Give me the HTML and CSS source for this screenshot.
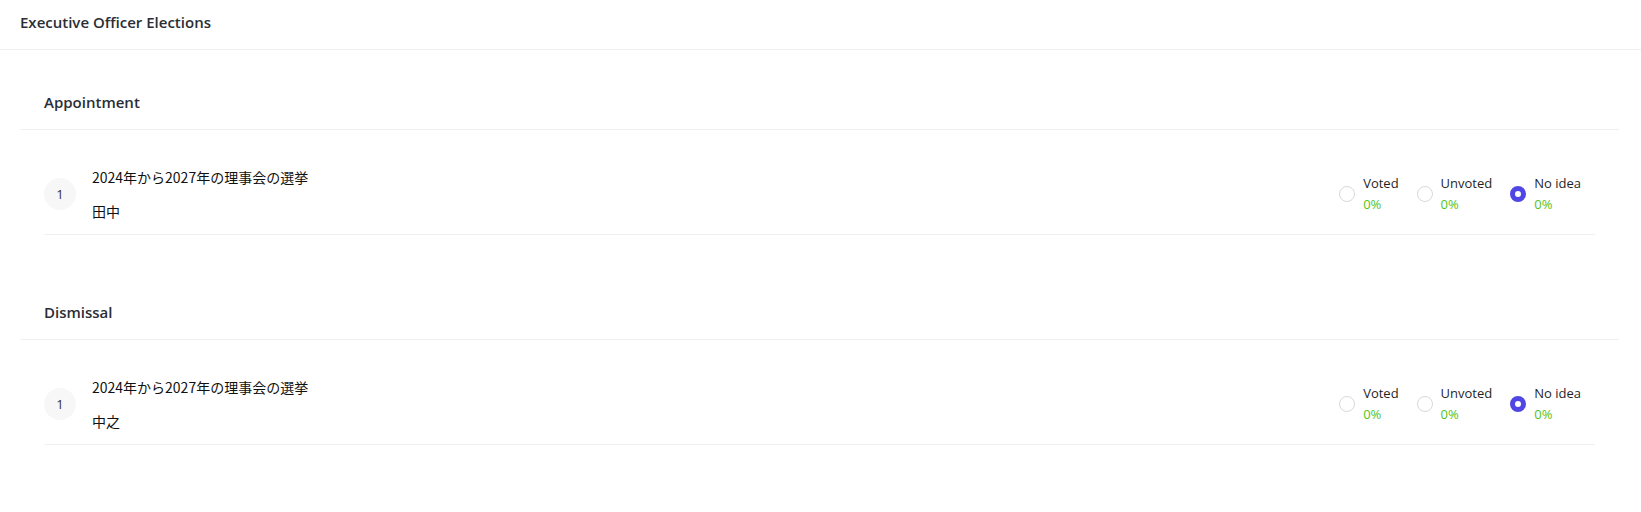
FILE: index.html
```html
<!DOCTYPE html>
<html lang="en">
<head>
<meta charset="utf-8">
<title>Executive Officer Elections</title>
<link rel="stylesheet" href="styles.css">
</head>
<body>
<header class="page-header">Executive Officer Elections</header>
<main class="content">
  <section class="section">
    <h2 class="section-title">Appointment</h2>
    <div class="list">
      <div class="row">
        <div class="index">1</div>
        <div class="info">
          <div class="title">2024年から2027年の理事会の選挙</div>
          <div class="name">田中</div>
        </div>
        <div class="options">
          <div class="option"><span class="radio"></span><div class="label"><div class="opt-name">Voted</div><div class="pct">0%</div></div></div>
          <div class="option"><span class="radio"></span><div class="label"><div class="opt-name">Unvoted</div><div class="pct">0%</div></div></div>
          <div class="option"><span class="radio checked"></span><div class="label"><div class="opt-name">No idea</div><div class="pct">0%</div></div></div>
        </div>
      </div>
    </div>
  </section>
  <section class="section">
    <h2 class="section-title">Dismissal</h2>
    <div class="list">
      <div class="row">
        <div class="index">1</div>
        <div class="info">
          <div class="title">2024年から2027年の理事会の選挙</div>
          <div class="name">中之</div>
        </div>
        <div class="options">
          <div class="option"><span class="radio"></span><div class="label"><div class="opt-name">Voted</div><div class="pct">0%</div></div></div>
          <div class="option"><span class="radio"></span><div class="label"><div class="opt-name">Unvoted</div><div class="pct">0%</div></div></div>
          <div class="option"><span class="radio checked"></span><div class="label"><div class="opt-name">No idea</div><div class="pct">0%</div></div></div>
        </div>
      </div>
    </div>
  </section>
</main>
</body>
</html>
```

FILE: styles.css
```css
* { box-sizing: border-box; }
html, body { margin: 0; padding: 0; background: #fff; }
body {
  font-family: "Open Sans", "Noto Sans CJK JP", sans-serif;
  color: #1f1f1f;
  font-size: 14px;
}
.page-header {
  height: 50px;
  padding: 11px 20px 0;
  line-height: 22px;
  font-size: 15px;
  font-weight: 600;
  color: #2a2e36;
  border-bottom: 1px solid #f0f0f0;
}
.content {
  padding: 25px 22px 0 20px;
  display: flex;
  flex-direction: column;
  gap: 50px;
}
.section-title {
  margin: 0;
  padding: 16px 24px;
  line-height: 22px;
  font-size: 15px;
  font-weight: 600;
  color: #2a2e36;
  border-bottom: 1px solid #f0f0f0;
}
.list {
  padding: 24px 24px 0;
}
.row {
  display: flex;
  align-items: center;
  padding: 12px 0;
  border-bottom: 1px solid #f0f0f0;
}
.index {
  width: 32px;
  height: 32px;
  border-radius: 50%;
  background: #f7f7f7;
  display: flex;
  align-items: center;
  justify-content: center;
  font-size: 13px;
  color: #333;
  flex-shrink: 0;
}
.info {
  margin-left: 16px;
  flex: 1;
  font-family: "Noto Sans CJK JP", sans-serif;
  color: #111;
  font-size: 14px;
}
.title { line-height: 22px; margin-bottom: 12px; }
.name { line-height: 22px; }
.options {
  display: flex;
  align-items: center;
  gap: 18px;
  padding-right: 14px;
}
.option {
  display: flex;
  align-items: center;
  gap: 8px;
}
.radio {
  width: 16px;
  height: 16px;
  border-radius: 50%;
  border: 1px solid #d9d9d9;
  background: #fff;
  flex-shrink: 0;
}
.radio.checked {
  border: 5px solid #4f46e5;
  background: #fff;
}
.label {
  font-size: 13px;
  line-height: 21px;
}
.opt-name { color: #1f1f1f; }
.pct { color: #52c41a; }
```
